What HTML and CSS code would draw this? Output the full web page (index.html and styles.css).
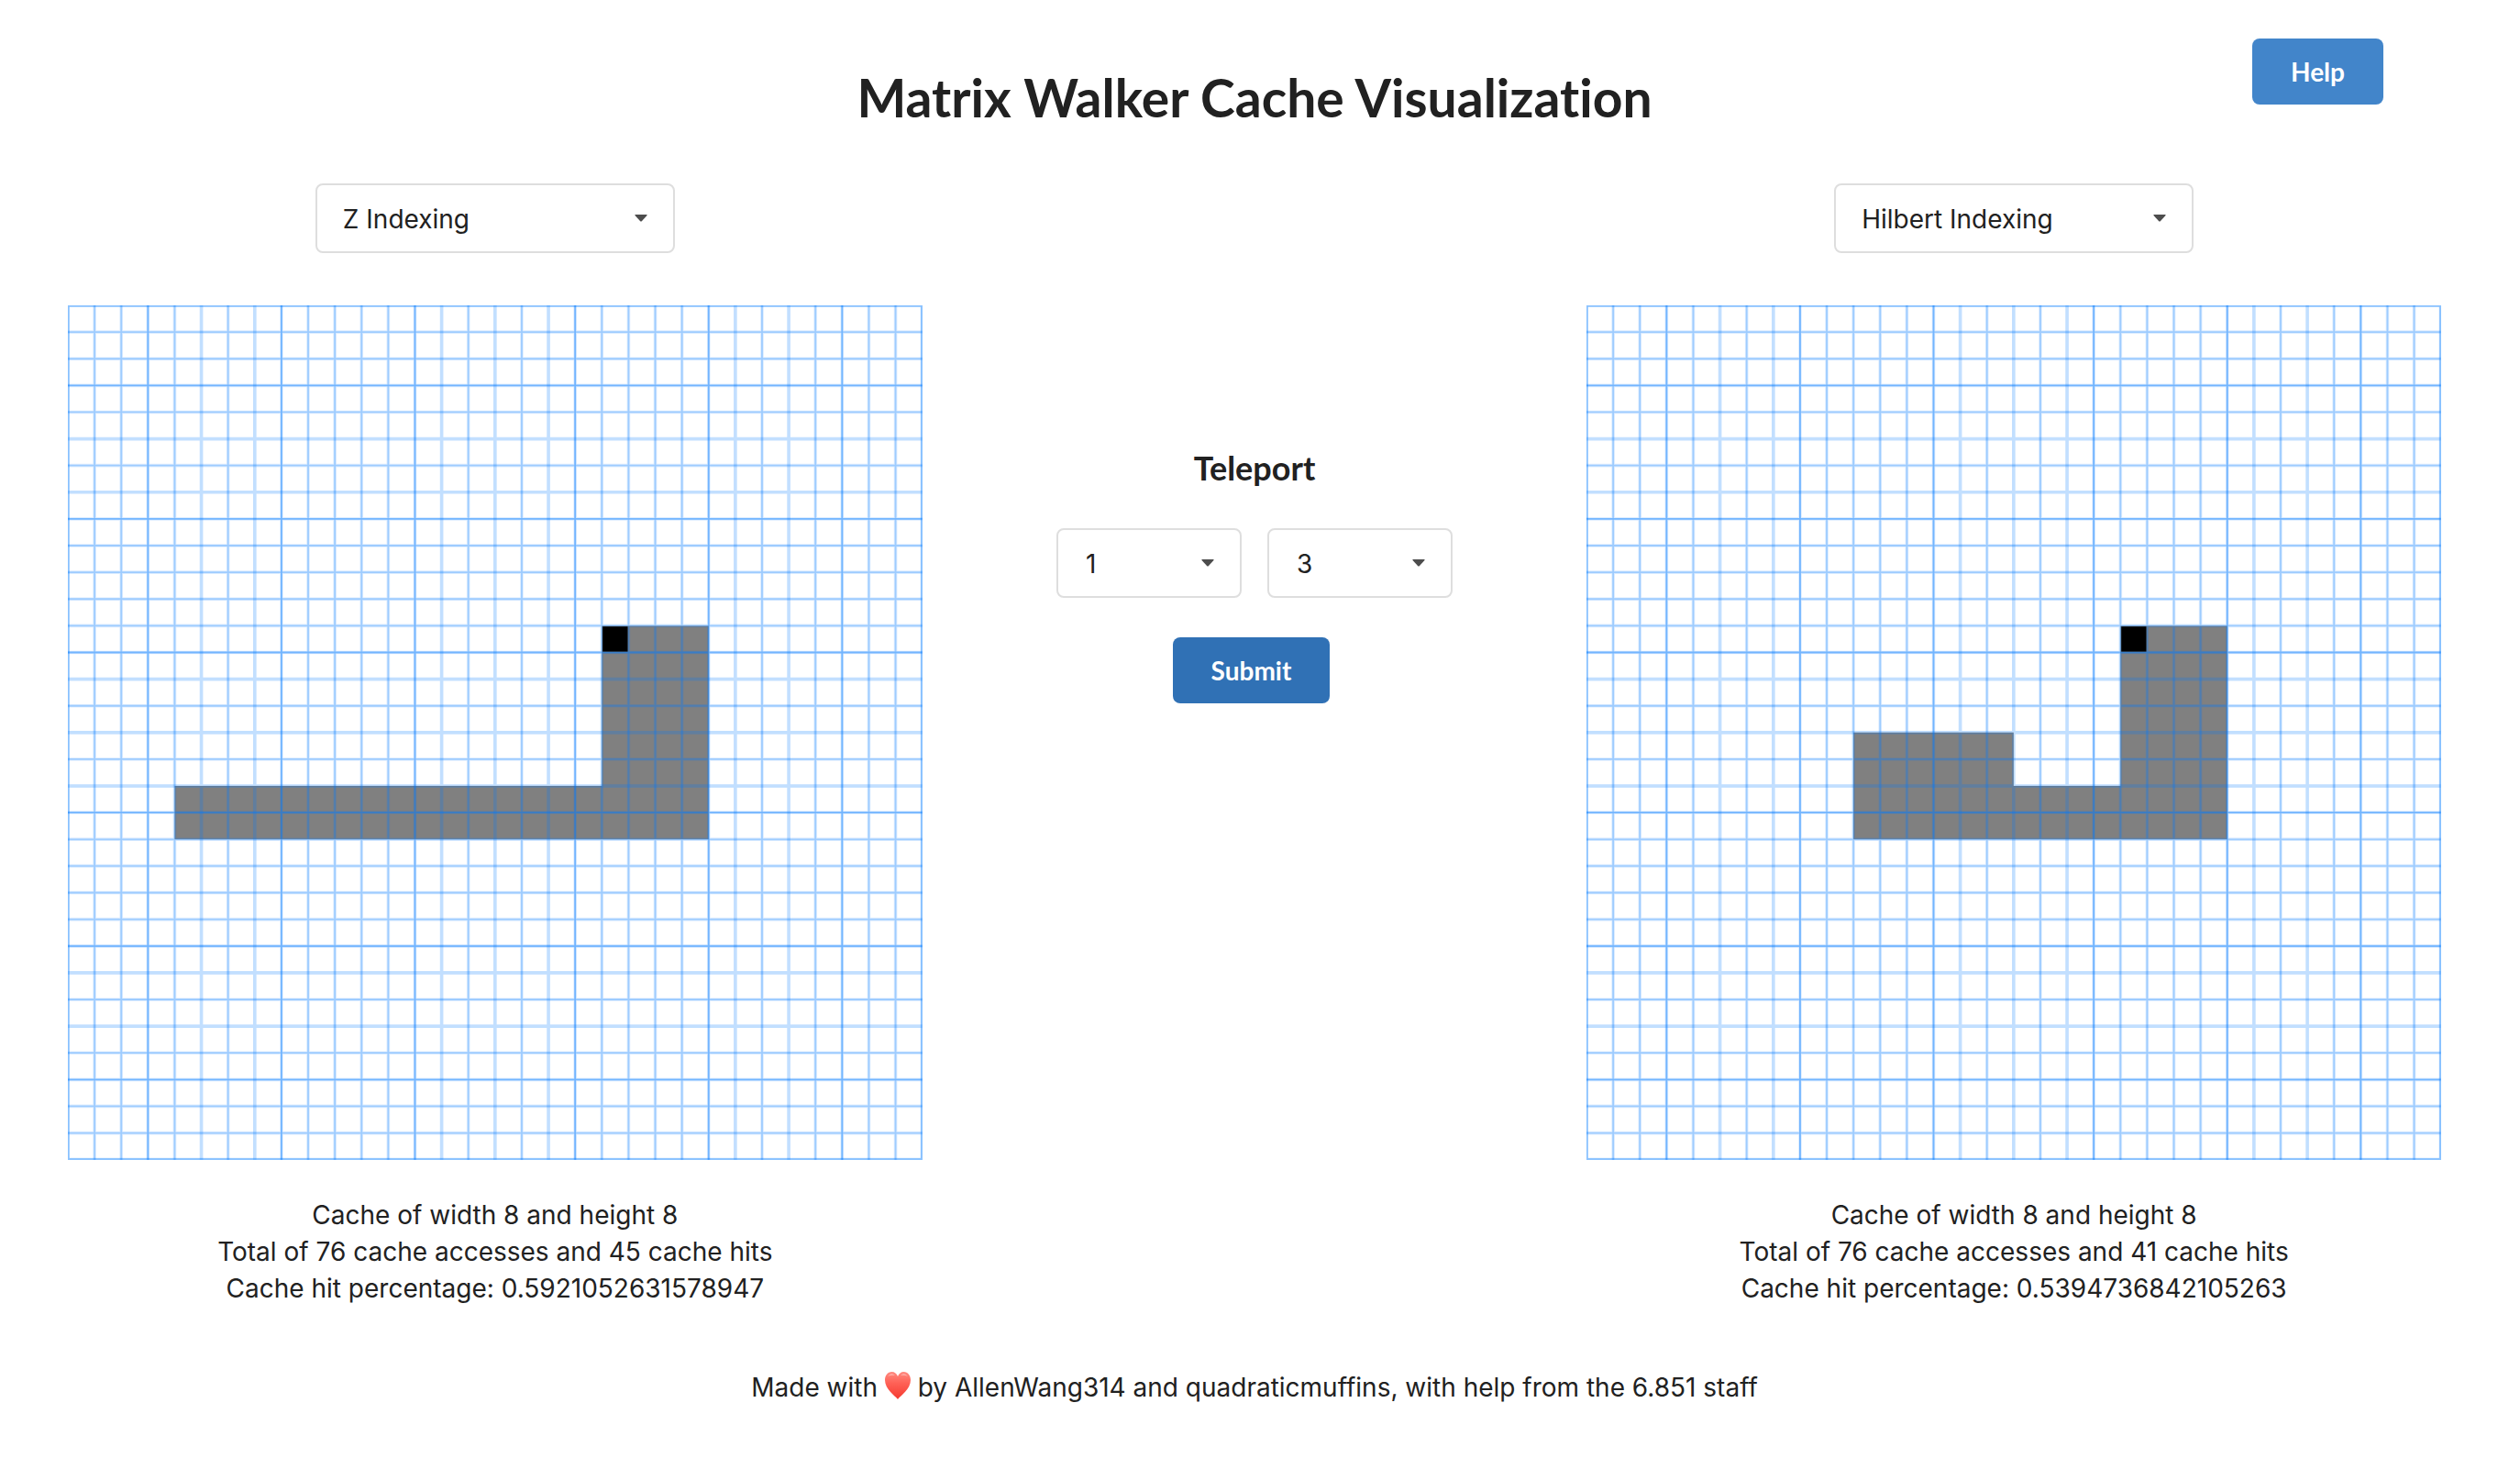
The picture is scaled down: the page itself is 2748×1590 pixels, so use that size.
FILE: index.html
```html
<!DOCTYPE html>
<html lang="en">
<head>
<meta charset="utf-8">
<title>Matrix Walker Cache Visualization</title>
<link rel="stylesheet" href="styles.css">
</head>
<body>
<svg class="defs" aria-hidden="true">
  <defs>
    <linearGradient id="heart-fill" x1="0" y1="0" x2="0" y2="1">
      <stop offset="0" stop-color="#ff8a80"/>
      <stop offset="0.4" stop-color="#ff6257"/>
      <stop offset="1" stop-color="#f5392f"/>
    </linearGradient>
    <!-- 32 x 32 lattice, 32 units per cell -->
    <g id="lattice">
      <path class="line halo" d="M32 0V1024M64 0V1024M96 0V1024M128 0V1024M192 0V1024M256 0V1024M288 0V1024M320 0V1024M352 0V1024M384 0V1024M416 0V1024M480 0V1024M544 0V1024M608 0V1024M640 0V1024M672 0V1024M704 0V1024M736 0V1024M768 0V1024M832 0V1024M896 0V1024M928 0V1024M960 0V1024M992 0V1024M0 32H1024M0 64H1024M0 96H1024M0 128H1024M0 192H1024M0 256H1024M0 288H1024M0 320H1024M0 352H1024M0 384H1024M0 416H1024M0 480H1024M0 544H1024M0 608H1024M0 640H1024M0 672H1024M0 704H1024M0 736H1024M0 768H1024M0 832H1024M0 896H1024M0 928H1024M0 960H1024M0 992H1024"/>
      <path class="line core" d="M32 0V1024M64 0V1024M96 0V1024M128 0V1024M192 0V1024M256 0V1024M288 0V1024M320 0V1024M352 0V1024M384 0V1024M416 0V1024M480 0V1024M544 0V1024M608 0V1024M640 0V1024M672 0V1024M704 0V1024M736 0V1024M768 0V1024M832 0V1024M896 0V1024M928 0V1024M960 0V1024M992 0V1024M0 32H1024M0 64H1024M0 96H1024M0 128H1024M0 192H1024M0 256H1024M0 288H1024M0 320H1024M0 352H1024M0 384H1024M0 416H1024M0 480H1024M0 544H1024M0 608H1024M0 640H1024M0 672H1024M0 704H1024M0 736H1024M0 768H1024M0 832H1024M0 896H1024M0 928H1024M0 960H1024M0 992H1024"/>
      <path class="line soft" d="M160 0V1024M224 0V1024M448 0V1024M512 0V1024M576 0V1024M800 0V1024M864 0V1024M0 160H1024M0 224H1024M0 448H1024M0 512H1024M0 576H1024M0 800H1024M0 864H1024"/>
      <path class="line strong" d="M96 0V1024M256 0V1024M416 0V1024M608 0V1024M768 0V1024M928 0V1024M0 96H1024M0 256H1024M0 416H1024M0 608H1024M0 768H1024M0 928H1024"/>
      <rect class="line edge" width="1024" height="1024"/>
    </g>
  </defs>
</svg>

<header class="header">
  <h1 class="title">Matrix Walker Cache Visualization</h1>
  <button class="button help" type="button">Help</button>
</header>

<main class="layout">
  <section class="panel">
    <div class="dropdown">
      <select class="select" aria-label="Left indexing"><option>Z Indexing</option><option>Hilbert Indexing</option></select>
      <svg class="caret" viewBox="0 0 14 8" aria-hidden="true"><path d="M1 0H13Q14 0 13.500 1L8 7Q7 8 6 7L.5 1Q0 0 1 0Z"/></svg>
    </div>
    <svg class="board" viewBox="0 0 1024 1024" role="img" aria-label="Z indexing cache">
      <path class="cached" d="M640 384H768V640H128V576H640Z"/>
      <use href="#lattice"/>
      <rect class="walker" x="641" y="385" width="30" height="30"/>
    </svg>
    <p class="stats">Cache of width 8 and height 8<br>Total of 76 cache accesses and 45 cache hits<br>Cache hit percentage: 0.5921052631578947</p>
  </section>

  <form class="teleport">
    <h2 class="subtitle">Teleport</h2>
    <div class="coords">
      <div class="dropdown small">
        <select class="select" aria-label="Row"><option>1</option></select>
        <svg class="caret" viewBox="0 0 14 8" aria-hidden="true"><path d="M1 0H13Q14 0 13.500 1L8 7Q7 8 6 7L.5 1Q0 0 1 0Z"/></svg>
      </div>
      <div class="dropdown small">
        <select class="select" aria-label="Column"><option>3</option></select>
        <svg class="caret" viewBox="0 0 14 8" aria-hidden="true"><path d="M1 0H13Q14 0 13.500 1L8 7Q7 8 6 7L.5 1Q0 0 1 0Z"/></svg>
      </div>
    </div>
    <button class="button submit" type="button">Submit</button>
  </form>

  <section class="panel">
    <div class="dropdown">
      <select class="select" aria-label="Right indexing"><option>Hilbert Indexing</option><option>Z Indexing</option></select>
      <svg class="caret" viewBox="0 0 14 8" aria-hidden="true"><path d="M1 0H13Q14 0 13.500 1L8 7Q7 8 6 7L.5 1Q0 0 1 0Z"/></svg>
    </div>
    <svg class="board" viewBox="0 0 1024 1024" role="img" aria-label="Hilbert indexing cache">
      <path class="cached" d="M640 384H768V640H320V512H512V576H640Z"/>
      <use href="#lattice"/>
      <rect class="walker" x="641" y="385" width="30" height="30"/>
    </svg>
    <p class="stats">Cache of width 8 and height 8<br>Total of 76 cache accesses and 41 cache hits<br>Cache hit percentage: 0.5394736842105263</p>
  </section>
</main>

<footer class="footer">Made with <svg class="heart" viewBox="0 0 28 30" role="img" aria-label="love"><path fill="url(#heart-fill)" d="M14 30C11 26 0 19 0 9C0 4 3 0 7.500 0C10.500 0 13 2 14 5C15 2 17.500 0 20.500 0C25 0 28 4 28 9C28 19 17 26 14 30Z"/><path fill="#fff" opacity=".4" d="M3 5Q7 0 11 4Q7 3 3 5ZM17 4Q21 0 25 5Q21 3 17 4Z"/></svg> by AllenWang314 and quadraticmuffins, with help from the 6.851 staff</footer>
</body>
</html>
```
FILE: styles.css
```css
* {
  box-sizing: border-box;
}

body {
  margin: 0;
  padding: 0 86px 0 74px;
  background: #fff;
  color: #212121;
  font: 28px/40px Inter, "Liberation Sans", sans-serif;
  font-variation-settings: "opsz" 32;
  font-variant-ligatures: no-common-ligatures;
}

.defs {
  display: block;
  width: 0;
  height: 0;
}

.header {
  display: grid;
  grid-template-columns: 1fr auto 1fr;
  align-items: start;
  padding-top: 42px;
}

.title {
  grid-column: 2;
  margin: 28px 0 0;
  font: 700 57px/72px Lato, sans-serif;
  font-variant-ligatures: no-common-ligatures;
}

.button {
  height: 72px;
  padding: 0 42px;
  border: 0;
  border-radius: 8px;
  color: #fff;
  font: 700 28px/28px Lato, sans-serif;
}

.help {
  justify-self: end;
  margin-right: 63px;
  background: #4285ca;
}

.submit {
  margin-right: 7px;
  background: #3071b5;
}

.layout {
  display: grid;
  grid-template-columns: 9fr 7fr 9fr;
  padding-top: 58px;
}

.panel {
  display: flex;
  flex-direction: column;
  align-items: center;
}

.dropdown {
  display: grid;
  grid-template-columns: 1fr 44px;
  align-items: center;
  width: 392px;
}

.select {
  grid-area: 1 / 1 / 2 / 3;
  width: 100%;
  height: 76px;
  padding: 1px 28px 0;
  border: 2px solid #dedede;
  border-radius: 8px;
  appearance: none;
  background: #fff;
  color: #212121;
  font: inherit;
  font-variation-settings: inherit;
}

.caret {
  grid-area: 1 / 2;
  width: 14px;
  height: 8px;
  fill: #4d4d4d;
  pointer-events: none;
}

.small {
  width: 202px;
}

.small .select {
  padding-left: 30px;
}

.board {
  display: block;
  width: 100%;
  margin-top: 57px;
}

.line {
  fill: none;
  stroke: #007bff;
}

.halo {
  stroke-width: 4;
  stroke-opacity: 0.14;
}

.core {
  stroke-width: 2;
  stroke-opacity: 0.28;
}

.soft {
  stroke-width: 4;
  stroke-opacity: 0.24;
}

.strong {
  stroke-width: 2;
  stroke-opacity: 0.28;
}

.edge {
  stroke-width: 4;
  stroke-opacity: 0.45;
}

.cached {
  fill: #808080;
}

.stats {
  margin: 40px 0 0;
  text-align: center;
}

.teleport {
  display: flex;
  flex-direction: column;
  align-items: center;
  padding-top: 290px;
}

.subtitle {
  margin: 0;
  font: 700 36px/40px Lato, sans-serif;
}

.coords {
  display: flex;
  gap: 28px;
  margin: 46px 0 43px;
}

.footer {
  margin-top: 68px;
  text-align: center;
}

.heart {
  width: 28px;
  height: 30px;
  vertical-align: -3px;
}
```
